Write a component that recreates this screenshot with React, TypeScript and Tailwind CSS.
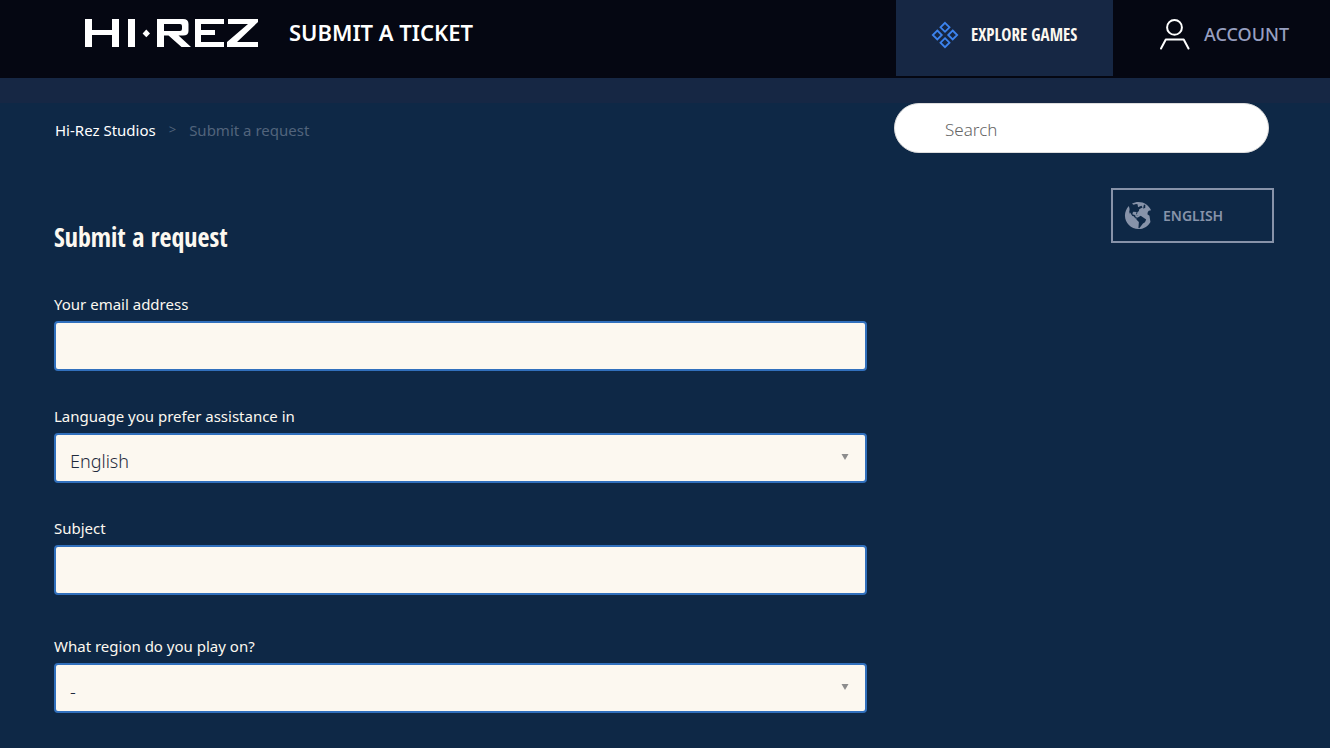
import type { ReactNode } from 'react';
import { GiEarthAmerica } from 'react-icons/gi';

function Logo() {
  return (
    <svg viewBox="0 0 174 28" className="h-7 w-[174px]" fill="#ffffff" role="img" aria-label="Hi-Rez">
      <path d="M0 0H7V11H27V0H34V28H27V16H7V28H0Z" />
      <path d="M43 0H50V28H43Z" />
      <path d="M61.3 10.5L65 14.4L61.3 18.3L57.6 14.4Z" />
      <path
        fillRule="evenodd"
        d="M72 0H98Q103.5 0 103.5 5V12Q103.5 16.5 98 16.5H93.5L106 28H96.5L83.5 16.5H79V28H72ZM79 5V12H95Q97 12 97 10V7Q97 5 95 5Z"
      />
      <path d="M110 0H139V5H116V11H130V16H116V23H139V28H110Z" />
      <path d="M143 0H173V3L152 23H173V28H142V23L163 5H143Z" />
    </svg>
  );
}

function GamesIcon() {
  return (
    <svg viewBox="0 0 28 28" className="size-7" fill="none" stroke="#3c83ee" strokeWidth="1.8">
      <path d="M14 1.8L18.5 6.3L14 10.8L9.5 6.3Z" />
      <path d="M14 17.2L18.5 21.7L14 26.2L9.5 21.7Z" />
      <path d="M6.3 9.5L10.8 14L6.3 18.5L1.8 14Z" />
      <path d="M21.7 9.5L26.2 14L21.7 18.5L17.2 14Z" />
    </svg>
  );
}

function UserIcon() {
  return (
    <svg viewBox="0 0 30 32" className="h-8 w-[30px]" fill="none" stroke="#ffffff" strokeWidth="2">
      <circle cx="14.5" cy="9.4" r="7.4" />
      <path d="M1 30.5L5.8 21.5H23.7L28.5 30.5" strokeLinejoin="round" strokeLinecap="round" />
    </svg>
  );
}

const controlClass =
  'block h-[50px] w-full appearance-none rounded-[4px] border-2 border-[#3170bd] bg-[#fcf8f0] px-[14px] text-lg font-light text-[#1f2a3c] outline-none';

function Field({ id, label, children }: { id: string; label: string; children: ReactNode }) {
  return (
    <div>
      <label htmlFor={id} className="mb-[5px] block text-[15px] leading-6 text-[#fcf8f0]">
        {label}
      </label>
      {children}
    </div>
  );
}

function SelectField({ id, label, options }: { id: string; label: string; options: string[] }) {
  return (
    <Field id={id} label={label}>
      <div className="relative">
        <select id={id} className={`${controlClass} pt-1.5`}>
          {options.map((option) => (
            <option key={option}>{option}</option>
          ))}
        </select>
        <svg viewBox="0 0 8 6" className="pointer-events-none absolute right-[18px] top-[21px] h-1.5 w-2" fill="#8d8d8d">
          <path d="M0.5 0H7.5L4 6Z" />
        </svg>
      </div>
    </Field>
  );
}

export default function App() {
  return (
    <div className="min-h-screen bg-[#0e2846] font-['Noto_Sans','Open_Sans',sans-serif]">
      <header className="flex h-[78px] items-start bg-[#050712] pl-[85px]">
        <a href="#home" className="mt-[19px]">
          <Logo />
        </a>
        <span className="ml-[30px] mt-4 text-[22px] font-semibold leading-8 text-white">SUBMIT A TICKET</span>
        <nav className="ml-auto flex">
          <a href="#games" className="flex h-[76px] w-[217px] items-center gap-3 bg-[#162744] pb-1.5 pl-[35px]">
            <GamesIcon />
            <span className="font-['Open_Sans_Condensed','Roboto_Condensed',sans-serif] text-[17px] font-bold text-[#fcf8f0]">
              EXPLORE GAMES
            </span>
          </a>
          <a href="#account" className="flex h-[68px] w-[217px] items-center gap-[14px] pl-[47px]">
            <UserIcon />
            <span className="text-[18px] font-medium text-[#979fc0]">ACCOUNT</span>
          </a>
        </nav>
      </header>
      <div className="h-[25px] bg-[#162744]" />

      <div className="flex items-center justify-between pl-[55px] pr-[61px]">
        <nav aria-label="Breadcrumb" className="flex h-[54px] items-center gap-[13px] text-[15px]">
          <a href="#studios" className="text-white">Hi-Rez Studios</a>
          <span className="text-[13px] text-[#52647c]">&gt;</span>
          <span className="text-[#52647c]">Submit a request</span>
        </nav>
        <input
          type="search"
          aria-label="Search"
          placeholder="Search"
          className="h-[50px] w-[375px] self-start rounded-full border border-[#dddddd] bg-white pl-[50px] pr-5 pt-0.5 text-[17px] font-light text-[#333333] outline-none placeholder:text-[#666666]"
        />
      </div>

      <main className="flex items-start justify-between pb-9 pl-[54px] pr-[56px] pt-[31px]">
        <div className="w-2/3">
          <h1 className="mt-6 font-['Open_Sans_Condensed','Roboto_Condensed',sans-serif] text-[26px] font-bold leading-[50px] text-[#fcf8f0]">
            Submit a request
          </h1>
          <form className="mt-[30px] flex flex-col gap-[33px]">
            <Field id="email" label="Your email address">
              <input id="email" type="email" className={controlClass} />
            </Field>
            <SelectField id="language" label="Language you prefer assistance in" options={['English']} />
            <Field id="subject" label="Subject">
              <input id="subject" type="text" className={controlClass} />
            </Field>
            <div className="pt-1.5">
              <SelectField id="region" label="What region do you play on?" options={['-']} />
            </div>
          </form>
        </div>
        <button
          type="button"
          className="flex h-[55px] w-[163px] items-center gap-[9px] border-2 border-[#8793a9] pl-[10px] text-[14px] font-semibold text-[#8793a9]"
        >
          <GiEarthAmerica className="size-[31px]" />
          ENGLISH
        </button>
      </main>
    </div>
  );
}
